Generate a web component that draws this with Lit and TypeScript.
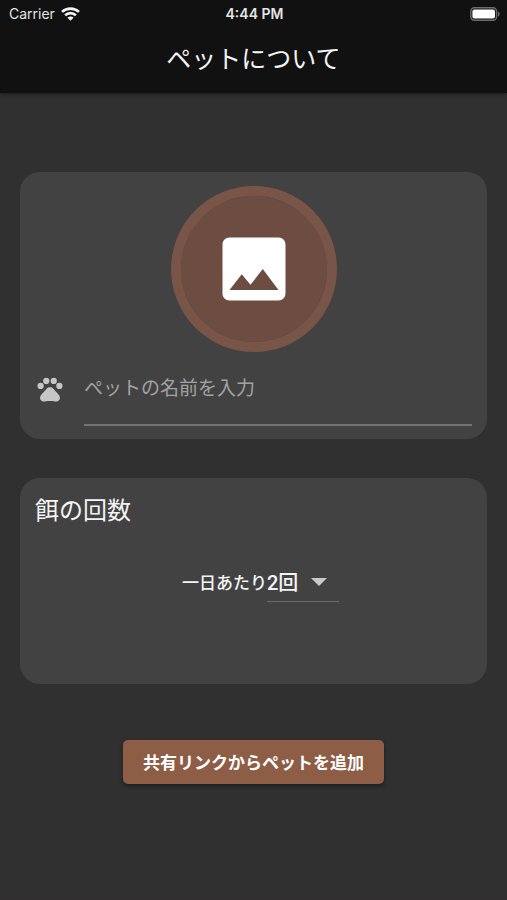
import { LitElement, html, css } from "lit";
import { customElement, state } from "lit/decorators.js";

@customElement("status-bar")
class StatusBar extends LitElement {
  static styles = css`
    :host {
      display: grid;
      grid-template-columns: 1fr auto 1fr;
      align-items: center;
      height: 28px;
      padding: 0 7px 0 9px;
      font-family: Inter, "Liberation Sans", sans-serif;
      font-size: 14px;
      line-height: 20px;
      color: #e4e4e4;
    }
    .carrier {
      display: flex;
      align-items: center;
      gap: 6px;
    }
    .time {
      font-weight: 600;
    }
    .battery {
      justify-self: end;
    }
    svg {
      display: block;
    }
  `;

  render() {
    return html`
      <div class="carrier">
        <span>Carrier</span>
        <svg width="19" height="14" viewBox="0 0 19 14" fill="none" stroke="#f2f2f2" stroke-width="2.6" aria-hidden="true">
          <path d="M1 4.9C5.8.5 13.2.5 18 4.9" />
          <path d="M4.1 8.3c3.1-2.9 7.7-2.9 10.8 0" />
          <path d="M9.5 13.8 6.4 10.7c1.8-1.5 4.4-1.5 6.2 0z" fill="#f2f2f2" stroke="none" />
        </svg>
      </div>
      <span class="time">4:44 PM</span>
      <svg class="battery" width="30" height="14" viewBox="0 0 30 14" aria-hidden="true">
        <rect x=".8" y=".8" width="25.8" height="12.4" rx="3.6" fill="none" stroke="#6c6c6c" stroke-width="1.4" />
        <rect x="2.4" y="2.4" width="22.6" height="9.2" rx="2" fill="#fff" />
        <path d="M28 4.6c2.2.8 2.2 4 0 4.8z" fill="#6c6c6c" />
      </svg>
    `;
  }
}

@customElement("app-root")
class AppRoot extends LitElement {
  @state() private meals = "2";

  static styles = css`
    :host {
      display: flex;
      flex-direction: column;
      box-sizing: border-box;
      min-height: 100vh;
      background: #303030;
      border-bottom: 1px solid #3a2d32;
      color: #f4f4f4;
      font-family: Roboto, "Noto Sans CJK JP", sans-serif;
    }
    header {
      background: #111;
      box-shadow: 0 1px 4px rgba(0, 0, 0, 0.5);
    }
    h1,
    h2 {
      margin: 0;
      font-size: 24px;
      line-height: 38px;
      font-weight: 400;
    }
    h1 {
      padding: 13px 0 14px;
      font-size: 25px;
      text-align: center;
    }
    main {
      display: flex;
      flex-direction: column;
      gap: 39px;
      padding: 79px 20px 20px;
    }
    .card {
      display: flex;
      flex-direction: column;
      padding: 14px 15px 13px;
      border-radius: 20px;
      background: #424242;
    }
    .photo {
      display: grid;
      place-items: center;
      align-self: center;
      box-sizing: border-box;
      width: 166px;
      height: 166px;
      padding: 0;
      border: 10px solid #795548;
      border-radius: 50%;
      background: #6d4c41;
      background-clip: padding-box;
      color: #fff;
    }
    .field {
      display: flex;
      gap: 19px;
      margin-top: 12px;
    }
    .paw {
      flex: none;
      margin-top: 10px;
      color: #c6c6c6;
    }
    .name {
      flex: 1;
      min-width: 0;
      box-sizing: border-box;
      height: 62px;
      padding: 0 0 12px;
      border: 0;
      border-bottom: 2px solid #727272;
      border-radius: 0;
      outline: 0;
      background: none;
      color: inherit;
      font: inherit;
      font-size: 19px;
    }
    .name::placeholder {
      color: #a2a2a2;
      opacity: 1;
    }
    .meals {
      display: flex;
      justify-content: center;
      align-items: center;
      margin: 32px 0 69px;
      padding-left: 14px;
      font-size: 17px;
      font-weight: 500;
    }
    .meals label {
      padding-bottom: 2px;
    }
    .drop {
      display: grid;
      align-items: center;
    }
    .drop > * {
      grid-area: 1 / 1;
    }
    .arrow {
      justify-self: end;
      margin-right: 12px;
      color: #c9c9c9;
      pointer-events: none;
    }
    select {
      appearance: none;
      box-sizing: border-box;
      width: 72px;
      height: 40px;
      margin: 0;
      padding: 2px 0 0;
      border: 0;
      border-bottom: 1px solid #6b6b6b;
      border-radius: 0;
      outline: 0;
      background: none;
      color: inherit;
      font: inherit;
      font-size: 20px;
    }
    .share {
      align-self: center;
      margin-top: 17px;
      height: 44px;
      padding: 0 20px 2px;
      border: 0;
      border-radius: 5px;
      background: #8d5d46;
      box-shadow: 0 2px 4px rgba(0, 0, 0, 0.4);
      color: #fff;
      font: inherit;
      font-size: 17px;
      font-weight: 700;
    }
    svg {
      display: block;
      fill: currentColor;
    }
  `;

  private changeMeals(event: Event) {
    this.meals = (event.target as HTMLSelectElement).value;
  }

  render() {
    return html`
      <header>
        <status-bar></status-bar>
        <h1>ペットについて</h1>
      </header>
      <main>
        <section class="card">
          <button class="photo" type="button" aria-label="写真を選択">
            <svg width="84" height="84" viewBox="0 0 24 24" aria-hidden="true">
              <path d="M21 19V5c0-1.1-.9-2-2-2H5c-1.1 0-2 .9-2 2v14c0 1.1.9 2 2 2h14c1.1 0 2-.9 2-2zM8.5 13.5l2.5 3.01L14.5 12l4.5 6H5l3.5-4.5z" />
            </svg>
          </button>
          <label class="field">
            <svg class="paw" width="30" height="30" viewBox="0 0 24 24" aria-hidden="true">
              <circle cx="4.5" cy="9.5" r="2.5" />
              <circle cx="9" cy="5.5" r="2.5" />
              <circle cx="15" cy="5.5" r="2.5" />
              <circle cx="19.5" cy="9.5" r="2.5" />
              <path d="M17.34 14.86c-.87-1.02-1.6-1.89-2.48-2.91-.46-.54-1.05-1.08-1.75-1.32-.11-.04-.22-.07-.33-.09-.25-.04-.52-.04-.78-.04s-.53 0-.79.05c-.11.02-.22.05-.33.09-.7.24-1.28.78-1.75 1.32-.87 1.02-1.6 1.89-2.48 2.91-1.31 1.31-2.92 2.76-2.62 4.79.29 1.02 1.02 2.03 2.33 2.32.73.15 3.06-.44 5.54-.44h.18c2.48 0 4.81.58 5.54.44 1.31-.29 2.04-1.31 2.33-2.32.31-2.04-1.3-3.49-2.61-4.8z" />
            </svg>
            <input class="name" type="text" placeholder="ペットの名前を入力" aria-label="ペットの名前" />
          </label>
        </section>
        <section class="card">
          <h2>餌の回数</h2>
          <div class="meals">
            <label for="meals">一日あたり</label>
            <div class="drop">
              <select id="meals" .value=${this.meals} @change=${this.changeMeals}>
                <option value="2">2回</option>
              </select>
              <svg class="arrow" width="16" height="8" viewBox="0 0 16 8" aria-hidden="true">
                <path d="M0 0h16L8 8z" />
              </svg>
            </div>
          </div>
        </section>
        <button class="share" type="button">共有リンクからペットを追加</button>
      </main>
    `;
  }
}
